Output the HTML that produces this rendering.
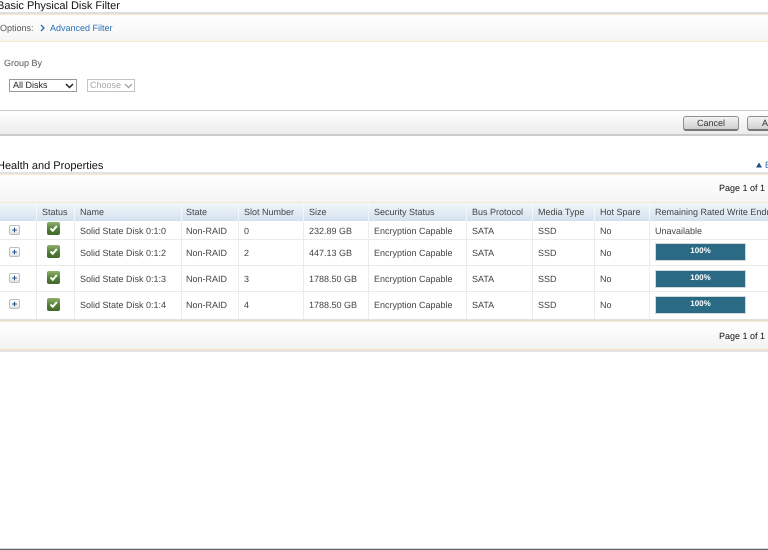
<!DOCTYPE html>
<html>
<head>
<meta charset="utf-8">
<style>
html,body{margin:0;padding:0;background:#fff}
body{width:768px;height:550px;overflow:hidden;position:relative;font-family:"Liberation Sans",sans-serif;font-size:9px;color:#444;text-rendering:geometricPrecision}
#w{position:absolute;left:0;top:0;width:768px;height:550px;overflow:hidden;filter:blur(.35px)}
.a{position:absolute;white-space:nowrap}
.t{position:absolute;white-space:nowrap;line-height:14px}
.h{position:absolute;font-size:11px;color:#111;white-space:nowrap;line-height:16px}
.l{position:absolute;left:0;width:768px}
.v{position:absolute;width:1px;background:#e9edf0;top:221px;height:98px}
.vh{position:absolute;width:1px;top:203px;height:18px;background:#f4f8fb}
.hr{position:absolute;left:0;width:768px;height:1px;background:#eaeaea}
.p{position:absolute;left:9px;width:9px;height:8px;border:1px solid #bcc0c4;border-radius:2px;background:linear-gradient(#fff,#e0e3e6);color:#1d4f86;font-size:9px;font-weight:bold;line-height:8px;text-align:center}
.c{position:absolute;left:47px;width:13px;height:13px;border-radius:2px;background:linear-gradient(#8fb06c,#4f7a32 60%,#45692c)}
.c svg{position:absolute;left:1px;top:1px}
.b{position:absolute;left:656px;width:89px;height:16px;background:#2a6a85;box-shadow:0 0 0 1px #d4d8da;color:#fff;font-weight:bold;font-size:8px;text-align:center;line-height:14px}
.btn{position:absolute;top:116px;height:12px;border:1px solid #8f8f8f;border-bottom:2px solid #777;border-radius:3px;background:linear-gradient(#f4f4f4,#cfcfcf);color:#333;font-size:9px;line-height:12px;text-align:center}
</style>
</head>
<body>
<div id="w">
<div class="h" style="left:-3px;top:-2px">Basic Physical Disk Filter</div>
<div class="l" style="top:12px;height:2px;background:#dcdfe3"></div>
<div class="l" style="top:14px;height:28px;box-sizing:border-box;border-top:1px solid #f6e9c4;border-bottom:1px solid #f6e9c4;background:linear-gradient(#fff,#f5f5f5)"></div>
<div class="t" style="left:0;top:21px;color:#555">Options:</div>
<svg class="a" style="left:40px;top:24px" width="5" height="8"><path d="M1 1l3 3-3 3" fill="none" stroke="#2a6aa8" stroke-width="1.3"/></svg>
<div class="t" style="left:50px;top:21px;color:#2a6fb5">Advanced Filter</div>
<div class="t" style="left:4px;top:56px;color:#555">Group By</div>
<div class="a" style="left:9px;top:79px;width:63px;height:11px;border:1px solid #9a9a9a;color:#222;line-height:11px;padding-left:3px">All Disks</div>
<svg class="a" style="left:65px;top:83px" width="9" height="6"><path d="M1 1l3.500 3.500L8 1" fill="none" stroke="#222" stroke-width="1.500"/></svg>
<div class="a" style="left:87px;top:79px;width:44px;height:11px;border:1px solid #c4c4c4;color:#a8a8a8;line-height:11px;padding-left:2px">Choose</div>
<svg class="a" style="left:124px;top:83px" width="9" height="6"><path d="M1 1l3.500 3.500L8 1" fill="none" stroke="#999" stroke-width="1.200"/></svg>

<div class="l" style="top:110px;height:26px;box-sizing:border-box;border-top:1px solid #ccc;border-bottom:2px solid #ccc;background:linear-gradient(#fff,#ececec)"></div>
<div class="btn" style="left:683px;width:54px">Cancel</div>
<div class="btn" style="left:747px;width:30px;text-align:left;padding-left:14px">Apply</div>

<div class="h" style="left:-3px;top:158px">Health and Properties</div>
<svg class="a" style="left:756px;top:162px" width="6" height="6"><path d="M0 5.500L3 .5l3 5z" fill="#1d4f86"/></svg>
<div class="t" style="left:765px;top:158px;color:#2a6fb5">E</div>
<div class="l" style="top:172px;height:2px;background:#dfe2e6"></div>
<div class="l" style="top:174px;height:29px;box-sizing:border-box;border-top:1px solid #f6e9c4;border-bottom:1px solid #f6e9c4;background:linear-gradient(#fff,#f5f5f5)"></div>
<div class="t" style="left:719px;top:181px;color:#111">Page 1 of 1</div>

<div class="l" style="top:203px;height:18px;background:linear-gradient(#f1f6fa,#d3e2ef)"></div>
<div class="vh" style="left:36px"></div><div class="vh" style="left:74px"></div><div class="vh" style="left:181px"></div><div class="vh" style="left:238px"></div><div class="vh" style="left:303px"></div><div class="vh" style="left:368px"></div><div class="vh" style="left:466px"></div><div class="vh" style="left:532px"></div><div class="vh" style="left:594px"></div><div class="vh" style="left:649px"></div>
<div class="v" style="left:36px"></div><div class="v" style="left:74px"></div><div class="v" style="left:181px"></div><div class="v" style="left:238px"></div><div class="v" style="left:303px"></div><div class="v" style="left:368px"></div><div class="v" style="left:466px"></div><div class="v" style="left:532px"></div><div class="v" style="left:594px"></div><div class="v" style="left:649px"></div>

<div class="t" style="left:42px;top:205px">Status</div><div class="t" style="left:80px;top:205px">Name</div><div class="t" style="left:186px;top:205px">State</div><div class="t" style="left:244px;top:205px">Slot Number</div><div class="t" style="left:309px;top:205px">Size</div><div class="t" style="left:374px;top:205px">Security Status</div><div class="t" style="left:472px;top:205px">Bus Protocol</div><div class="t" style="left:538px;top:205px">Media Type</div><div class="t" style="left:600px;top:205px">Hot Spare</div><div class="t" style="left:655px;top:205px;width:113px;overflow:hidden">Remaining Rated Write Endurance</div>

<div class="hr" style="top:239px"></div><div class="hr" style="top:265px"></div><div class="hr" style="top:291px"></div>

<div class="p" style="top:225px">+</div>
<div class="c" style="top:222px"><svg width="11" height="11"><path d="M2.500 5.500l2.300 2.300L8.800 3" fill="none" stroke="#fff" stroke-width="2"/></svg></div>
<div class="t" style="left:80px;top:224px">Solid State Disk 0:1:0</div><div class="t" style="left:186px;top:224px">Non-RAID</div><div class="t" style="left:244px;top:224px">0</div><div class="t" style="left:309px;top:224px">232.89 GB</div><div class="t" style="left:374px;top:224px">Encryption Capable</div><div class="t" style="left:472px;top:224px">SATA</div><div class="t" style="left:538px;top:224px">SSD</div><div class="t" style="left:600px;top:224px">No</div><div class="t" style="left:655px;top:224px">Unavailable</div>

<div class="p" style="top:247px">+</div>
<div class="c" style="top:245px"><svg width="11" height="11"><path d="M2.500 5.500l2.300 2.300L8.800 3" fill="none" stroke="#fff" stroke-width="2"/></svg></div>
<div class="t" style="left:80px;top:246px">Solid State Disk 0:1:2</div><div class="t" style="left:186px;top:246px">Non-RAID</div><div class="t" style="left:244px;top:246px">2</div><div class="t" style="left:309px;top:246px">447.13 GB</div><div class="t" style="left:374px;top:246px">Encryption Capable</div><div class="t" style="left:472px;top:246px">SATA</div><div class="t" style="left:538px;top:246px">SSD</div><div class="t" style="left:600px;top:246px">No</div><div class="b" style="top:244px">100%</div>

<div class="p" style="top:273px">+</div>
<div class="c" style="top:271px"><svg width="11" height="11"><path d="M2.500 5.500l2.300 2.300L8.800 3" fill="none" stroke="#fff" stroke-width="2"/></svg></div>
<div class="t" style="left:80px;top:272px">Solid State Disk 0:1:3</div><div class="t" style="left:186px;top:272px">Non-RAID</div><div class="t" style="left:244px;top:272px">3</div><div class="t" style="left:309px;top:272px">1788.50 GB</div><div class="t" style="left:374px;top:272px">Encryption Capable</div><div class="t" style="left:472px;top:272px">SATA</div><div class="t" style="left:538px;top:272px">SSD</div><div class="t" style="left:600px;top:272px">No</div><div class="b" style="top:271px">100%</div>

<div class="p" style="top:299px">+</div>
<div class="c" style="top:298px"><svg width="11" height="11"><path d="M2.500 5.500l2.300 2.300L8.800 3" fill="none" stroke="#fff" stroke-width="2"/></svg></div>
<div class="t" style="left:80px;top:298px">Solid State Disk 0:1:4</div><div class="t" style="left:186px;top:298px">Non-RAID</div><div class="t" style="left:244px;top:298px">4</div><div class="t" style="left:309px;top:298px">1788.50 GB</div><div class="t" style="left:374px;top:298px">Encryption Capable</div><div class="t" style="left:472px;top:298px">SATA</div><div class="t" style="left:538px;top:298px">SSD</div><div class="t" style="left:600px;top:298px">No</div><div class="b" style="top:297px">100%</div>

<div class="l" style="top:319px;height:2px;background:#e0e0e0"></div>
<div class="l" style="top:321px;height:29px;box-sizing:border-box;border-top:1px solid #f6e9c4;border-bottom:1px solid #f6e2b8;background:linear-gradient(#fff,#f3f3f3)"></div>
<div class="l" style="top:350px;height:2px;background:#e4e4e4"></div>
<div class="t" style="left:719px;top:329px;color:#111">Page 1 of 1</div>

<div class="l" style="top:548px;height:1px;background:#d8dcd6"></div>
<div class="l" style="top:549px;height:1px;background:#5a6470"></div>
</div>
</body>
</html>
